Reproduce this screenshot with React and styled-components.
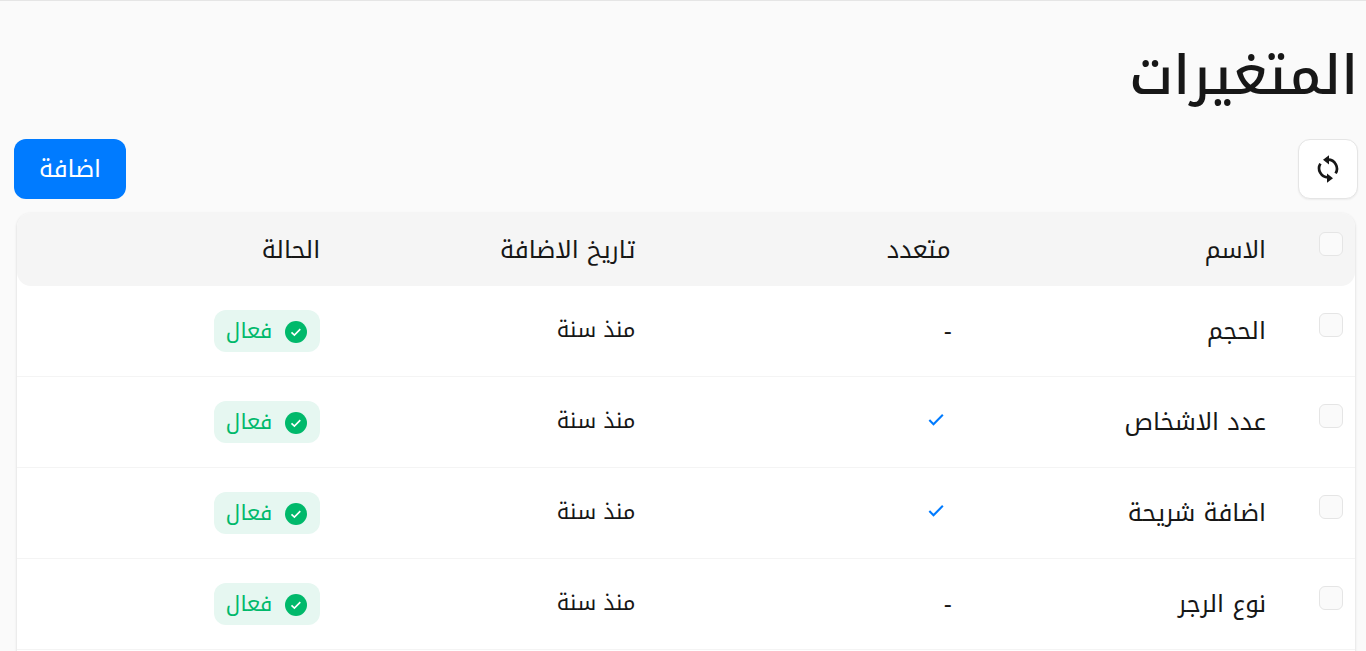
import styled, { createGlobalStyle } from "styled-components";

const GlobalStyle = createGlobalStyle`
	* {
		box-sizing: border-box;
	}

	body {
		margin: 0;
		height: 651px;
		overflow: hidden;
		background-color: #fafafa;
		color: #171717;
		font-family: "Noto Kufi Arabic", "Noto Sans", "DejaVu Sans", sans-serif;
		font-size: 24px;
	}
`;

const Page = styled.main`
	height: 651px;
	overflow: hidden;
	border-top: 1px solid #e5e5e5;
	padding: 30px 8px 0 14px;
`;

const Title = styled.h1`
	margin: 0;
	height: 90px;
	font-size: 54.5px;
	font-weight: 500;
	line-height: 90px;
`;

const Toolbar = styled.div`
	display: flex;
	justify-content: space-between;
	align-items: center;
	margin-top: 18px;
`;

const IconButton = styled.button`
	display: flex;
	justify-content: center;
	align-items: center;
	width: 60px;
	height: 60px;
	padding: 0;
	border: 1px solid #e5e5e5;
	border-radius: 12px;
	background-color: #fff;
	color: #171717;
	box-shadow: 0 1px 2px rgba(0, 0, 0, 0.06);
`;

const AddButton = styled.button`
	width: 112px;
	height: 60px;
	padding: 0;
	border: 0;
	border-radius: 12px;
	background-color: #007bff;
	color: #fff;
	font-family: inherit;
	font-size: 24.2px;
	line-height: 60px;
`;

const Table = styled.div`
	margin: 14px 3px 0;
	padding-bottom: 30px;
	border-radius: 14px 14px 0 0;
	background-color: #fff;
	box-shadow: 0 1px 3px rgba(0, 0, 0, 0.16);
`;

const Row = styled.div`
	display: grid;
	grid-template-columns: 77px repeat(4, 1fr);
	align-items: center;
	height: 91px;
	border-bottom: 1px solid #f4f4f4;
`;

const HeaderRow = styled(Row)`
	height: 73px;
	border-bottom: 0;
	border-radius: 14px;
	background-color: #f5f5f5;
`;

const Cell = styled.div`
	display: flex;
	align-items: center;
	padding: 0 12px;
	font-size: 24.25px;
	line-height: 42px;
`;

const DateCell = styled(Cell)`
	padding-bottom: 2px;
	font-size: 21.6px;
`;

const Checkbox = styled.span`
	width: 24px;
	height: 24px;
	margin-bottom: 12px;
	border: 1px solid #e5e5e5;
	border-radius: 6px;
	background-color: #fafafa;
`;

const TickIcon = styled.svg`
	margin: 0 5px 5px 0;
	color: #007bff;
`;

const Dash = styled.span`
	margin-right: -1px;
	font-family: "Liberation Sans", sans-serif;
`;

const Badge = styled.span`
	display: flex;
	align-items: center;
	gap: 12px;
	height: 42px;
	padding: 0 12px;
	border-radius: 12px;
	background-color: #e6f7f1;
	color: #00b96b;
	font-size: 21.3px;
	line-height: 42px;
`;

const SyncIcon = () => (
	<svg width="30" height="30" viewBox="0 0 30 30" fill="none">
		<path d="M15 5.7A9 9 0 0 1 22.6 19.4" stroke="currentColor" strokeWidth="2.7" />
		<path d="M15 23.3A9 9 0 0 1 7.4 9.6" stroke="currentColor" strokeWidth="2.7" />
		<path d="M16 1.2v9.2L10 5.8zM14 28.8v-9.2l6 4.6z" fill="currentColor" />
	</svg>
);

const Tick = () => (
	<TickIcon width="20" height="20" viewBox="0 0 24 24" fill="none">
		<path d="M4 12l5 5L20.2 5.8" stroke="currentColor" strokeWidth="2.5" />
	</TickIcon>
);

const CheckCircle = () => (
	<svg width="24" height="24" viewBox="0 0 24 24" fill="none">
		<circle cx="12" cy="13" r="11" fill="#00b96b" />
		<path d="M7.5 13.3l2.9 2.8 5.9-6" stroke="#fff" strokeWidth="1.6" />
	</svg>
);

const columns = ["الاسم", "متعدد", "تاريخ الاضافة", "الحالة"];

const variables = [
	{ name: "الحجم", multiple: false },
	{ name: "عدد الاشخاص", multiple: true },
	{ name: "اضافة شريحة", multiple: true },
	{ name: "نوع الرجر", multiple: false },
];

const App = () => (
	<Page dir="rtl">
		<GlobalStyle />
		<Title>المتغيرات</Title>
		<Toolbar>
			<IconButton>
				<SyncIcon />
			</IconButton>
			<AddButton>اضافة</AddButton>
		</Toolbar>
		<Table>
			<HeaderRow>
				<Cell>
					<Checkbox />
				</Cell>
				{columns.map((column) => (
					<Cell key={column}>{column}</Cell>
				))}
			</HeaderRow>
			{variables.map(({ name, multiple }) => (
				<Row key={name}>
					<Cell>
						<Checkbox />
					</Cell>
					<Cell>{name}</Cell>
					<Cell>{multiple ? <Tick /> : <Dash>-</Dash>}</Cell>
					<DateCell>منذ سنة</DateCell>
					<Cell>
						<Badge>
							<CheckCircle />
							فعال
						</Badge>
					</Cell>
				</Row>
			))}
		</Table>
	</Page>
);

export default App;
